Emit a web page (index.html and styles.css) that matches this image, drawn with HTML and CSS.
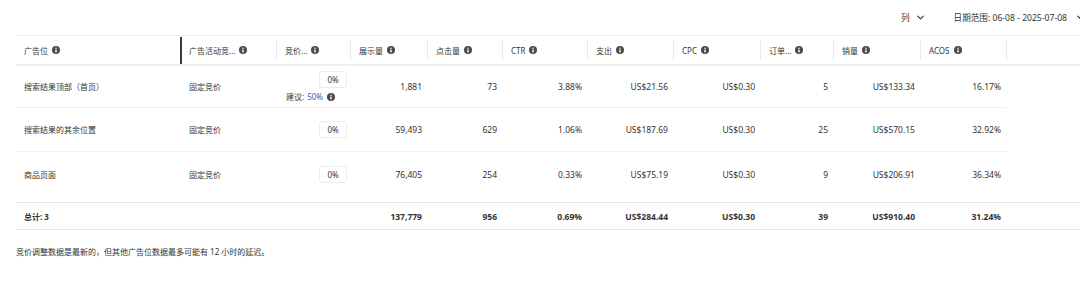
FILE: index.html
```html
<!DOCTYPE html>
<html lang="zh-CN">
<head>
    <meta charset="UTF-8">
    <meta name="viewport" content="width=device-width, initial-scale=1.0">
    <title>广告位</title>
    <link rel="stylesheet" href="styles.css">
</head>
<body>
    <svg class="defs" width="0" height="0">
        <symbol id="info" viewBox="0 0 16 16">
            <circle cx="8" cy="8" r="8" fill="currentColor"/>
            <circle cx="8" cy="4.3" r="1.5" fill="#fff"/>
            <rect x="6.6" y="6.8" width="2.8" height="6" rx="0.6" fill="#fff"/>
        </symbol>
        <symbol id="chevron" viewBox="0 0 10 6">
            <path d="M1 1l4 4 4-4" fill="none" stroke="currentColor" stroke-width="1.6" stroke-linecap="round" stroke-linejoin="round"/>
        </symbol>
    </svg>

    <div class="page">
        <div class="toolbar">
            <span class="drop">列 <svg class="chev"><use href="#chevron"/></svg></span>
            <span class="drop date">日期范围: 06-08 - 2025-07-08 <svg class="chev"><use href="#chevron"/></svg></span>
        </div>

        <div class="placement-table">
            <div class="trow thead">
                <div class="th first">广告位 <svg class="info"><use href="#info"/></svg></div>
                <div class="th pinned">广告活动竞... <svg class="info"><use href="#info"/></svg></div>
                <div class="th">竞价... <svg class="info"><use href="#info"/></svg></div>
                <div class="th">展示量 <svg class="info"><use href="#info"/></svg></div>
                <div class="th">点击量 <svg class="info"><use href="#info"/></svg></div>
                <div class="th">CTR <svg class="info"><use href="#info"/></svg></div>
                <div class="th">支出 <svg class="info"><use href="#info"/></svg></div>
                <div class="th">CPC <svg class="info"><use href="#info"/></svg></div>
                <div class="th">订单... <svg class="info"><use href="#info"/></svg></div>
                <div class="th">销量 <svg class="info"><use href="#info"/></svg></div>
                <div class="th">ACOS <svg class="info"><use href="#info"/></svg></div>
                <div class="th"></div>
            </div>

            <div class="tbody">
                <div class="trow row-top">
                    <div class="td first">搜索结果顶部（首页）</div>
                    <div class="td">固定竞价</div>
                    <div class="td bid">
                        <span class="bid-box">0%</span>
                        <span class="hint">建议: <a href="#">50%</a> <svg class="info"><use href="#info"/></svg></span>
                    </div>
                    <div class="td num">1,881</div>
                    <div class="td num">73</div>
                    <div class="td num">3.88%</div>
                    <div class="td num">US$21.56</div>
                    <div class="td num">US$0.30</div>
                    <div class="td num">5</div>
                    <div class="td num">US$133.34</div>
                    <div class="td num">16.17%</div>
                    <div class="td empty"></div>
                </div>
                <div class="trow">
                    <div class="td first">搜索结果的其余位置</div>
                    <div class="td">固定竞价</div>
                    <div class="td bid"><span class="bid-box">0%</span></div>
                    <div class="td num">59,493</div>
                    <div class="td num">629</div>
                    <div class="td num">1.06%</div>
                    <div class="td num">US$187.69</div>
                    <div class="td num">US$0.30</div>
                    <div class="td num">25</div>
                    <div class="td num">US$570.15</div>
                    <div class="td num">32.92%</div>
                    <div class="td empty"></div>
                </div>
                <div class="trow last">
                    <div class="td first">商品页面</div>
                    <div class="td">固定竞价</div>
                    <div class="td bid"><span class="bid-box">0%</span></div>
                    <div class="td num">76,405</div>
                    <div class="td num">254</div>
                    <div class="td num">0.33%</div>
                    <div class="td num">US$75.19</div>
                    <div class="td num">US$0.30</div>
                    <div class="td num">9</div>
                    <div class="td num">US$206.91</div>
                    <div class="td num">36.34%</div>
                    <div class="td empty"></div>
                </div>
            </div>

            <div class="trow tfoot">
                <div class="td first">总计: 3</div>
                <div class="td"></div>
                <div class="td"></div>
                <div class="td num">137,779</div>
                <div class="td num">956</div>
                <div class="td num">0.69%</div>
                <div class="td num">US$284.44</div>
                <div class="td num">US$0.30</div>
                <div class="td num">39</div>
                <div class="td num">US$910.40</div>
                <div class="td num">31.24%</div>
                <div class="td"></div>
            </div>
        </div>

        <p class="note">竞价调整数据是最新的，但其他广告位数据最多可能有 12 小时的延迟。</p>
    </div>
</body>
</html>
```

FILE: styles.css
```css
html, body {
    margin: 0;
    overflow: hidden;
    background: #fff;
}
body {
    font-family: "Noto Sans", "Noto Sans CJK SC", sans-serif;
    font-size: 8px;
    color: #333;
}
.defs {
    position: absolute;
}
.page {
    width: 1092px;
}
.toolbar {
    height: 35px;
    display: flex;
    justify-content: flex-end;
    align-items: center;
    gap: 30px;
    padding-right: 8px;
    box-sizing: border-box;
    font-size: 8.6px;
}
.drop {
    display: flex;
    align-items: center;
    gap: 7px;
    line-height: 10px;
}
.drop.date {
    gap: 10px;
}
.chev {
    width: 7px;
    height: 5px;
    color: #333;
}
.placement-table {
    margin-left: 16px;
}
.trow {
    display: grid;
    grid-template-columns: 164px 96px 74px 77px 75px 85px 86px 87px 73px 87px 86px 1fr;
}
.thead {
    border-top: 1px solid #ededed;
    border-bottom: 2px solid #efefef;
}
.th {
    height: 28px;
    display: flex;
    align-items: center;
    padding-left: 9px;
    white-space: nowrap;
    background: linear-gradient(#e9e9e9, #e9e9e9) left center / 1px 20px no-repeat;
}
.th.first {
    padding-left: 8px;
    background: none;
}
.th.pinned {
    background: linear-gradient(#3a3a3a, #3a3a3a) left center / 2px 27px no-repeat;
}
.info {
    width: 8px;
    height: 8px;
    margin-left: 4px;
    color: #4a4a4a;
    flex: none;
}
.tbody {
    height: 136px;
}
.td {
    display: flex;
    align-items: center;
    padding-left: 9px;
    white-space: nowrap;
    border-bottom: 1px solid #f0f0f0;
}
.td.first {
    padding-left: 8px;
}
.td.num {
    justify-content: flex-end;
    padding-left: 0;
    padding-right: 5px;
    font-size: 8.5px;
}
.td.empty {
    border-bottom: none;
}
.tbody .trow {
    height: 44px;
}
.tbody .trow.row-top {
    height: 42px;
}
.tbody .trow.last .td {
    border-bottom: none;
}
.bid {
    flex-direction: column;
    align-items: flex-end;
    justify-content: center;
    padding-right: 3px;
    gap: 3px;
}
.bid-box {
    width: 28px;
    height: 17px;
    box-sizing: border-box;
    border: 1px solid #ececec;
    border-radius: 3px;
    display: flex;
    align-items: center;
    justify-content: center;
}
.hint {
    display: flex;
    align-items: center;
    margin-right: 12px;
    line-height: 11px;
}
.hint a {
    color: #1565c8;
    text-decoration: none;
    margin-left: 3px;
}
.tfoot {
    height: 28px;
    box-sizing: border-box;
    border-top: 1px solid #e6e6e6;
    border-bottom: 1px solid #e6e6e6;
    font-weight: 700;
}
.tfoot .td {
    border-bottom: none;
}
.note {
    margin: 16px 0 0 16px;
    line-height: 12px;
}
```
